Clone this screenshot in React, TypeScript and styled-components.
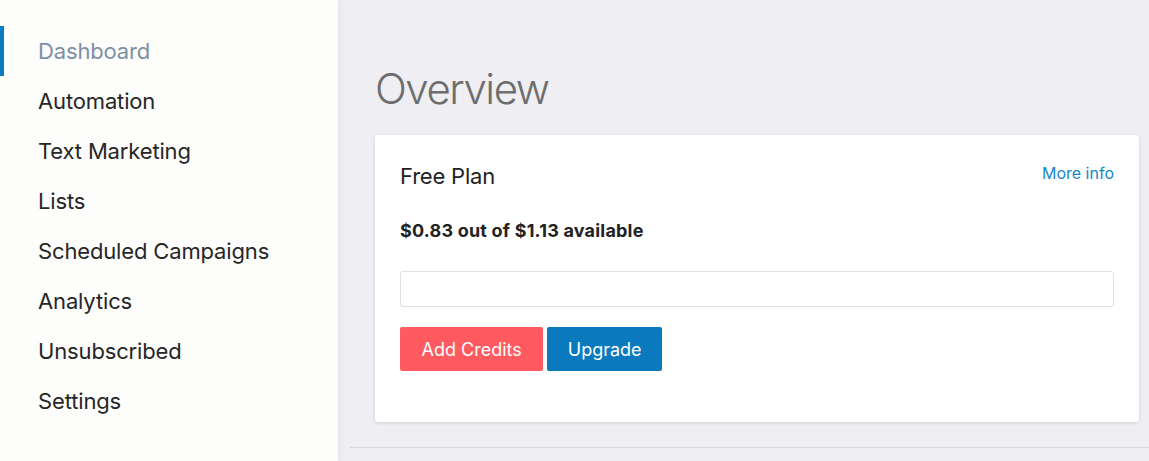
import React from "react";
import styled, { createGlobalStyle } from "styled-components";

const Global = createGlobalStyle`
  html, body { margin: 0; padding: 0; }
  body {
    font-family: Inter, "Liberation Sans", Arial, sans-serif;
    background: #eeeef3;
    -webkit-font-smoothing: antialiased;
  }
`;

const Layout = styled.div`
  display: flex;
  width: 1149px;
  height: 461px;
  overflow: hidden;
  background: #eeeef3;
`;

const Sidebar = styled.nav`
  width: 338px;
  flex-shrink: 0;
  background: #fdfdfc;
  padding-top: 26px;
  box-shadow: 2px 0 8px rgba(0, 0, 0, 0.05);
  position: relative;
  z-index: 1;
`;

const NavItem = styled.a<{ $active?: boolean }>`
  display: flex;
  align-items: center;
  height: 50px;
  padding-left: 34px;
  font-size: 22px;
  font-weight: 400;
  color: ${(p) => (p.$active ? "#7c90a6" : "#262626")};
  border-left: 4px solid ${(p) => (p.$active ? "#0b7bc1" : "transparent")};
  text-decoration: none;
  letter-spacing: -0.15px;
`;

const Main = styled.main`
  flex: 1;
  padding: 64px 10px 0 37px;
  display: flex;
  flex-direction: column;
`;

const Title = styled.h1`
  margin: 0 0 21px 0;
  font-size: 42px;
  font-weight: 300;
  color: #6d6d6d;
  line-height: 50px;
  letter-spacing: -1.5px;
`;

const Card = styled.section`
  background: #fff;
  border-radius: 3px;
  box-shadow: 0 1px 4px rgba(0, 0, 0, 0.12);
  padding: 24px 25px 51px 25px;
  display: flex;
  flex-direction: column;
`;

const CardHeader = styled.div`
  display: flex;
  justify-content: space-between;
  align-items: center;
`;

const PlanName = styled.h2`
  margin: 0;
  font-size: 22px;
  font-weight: 400;
  color: #222;
  line-height: 34px;
  letter-spacing: -0.2px;
`;

const MoreInfo = styled.a`
  font-size: 16px;
  color: #1a85c8;
  text-decoration: none;
  margin-top: -6px;
`;

const Balance = styled.p`
  margin: 27px 0 0 0;
  font-size: 18px;
  font-weight: 700;
  color: #222;
  line-height: 22px;
  letter-spacing: 0.2px;
`;

const Input = styled.input`
  margin-top: 29px;
  height: 36px;
  box-sizing: border-box;
  border: 1px solid #dcdfe6;
  border-radius: 3px;
  background: #fff;
  outline: none;
`;

const Buttons = styled.div`
  display: flex;
  gap: 4px;
  margin-top: 20px;
`;

const Button = styled.button<{ $variant: "red" | "blue" }>`
  height: 44px;
  padding: 0 ${(p) => (p.$variant === "red" ? "21.5px" : "20.5px")};
  border: none;
  border-radius: 2px;
  font-family: inherit;
  font-size: 18px;
  color: #fff;
  background: ${(p) => (p.$variant === "red" ? "#ff5a5f" : "#0a79bd")};
`;

const Divider = styled.hr`
  margin: 25px 0 0 -25px;
  border: none;
  border-top: 1px solid #d5d9e0;
  width: calc(100% + 40px);
`;

const items = [
  "Dashboard",
  "Automation",
  "Text Marketing",
  "Lists",
  "Scheduled Campaigns",
  "Analytics",
  "Unsubscribed",
  "Settings",
];

export default function App() {
  return (
    <>
      <Global />
      <Layout>
        <Sidebar>
          {items.map((it, i) => (
            <NavItem key={it} $active={i === 0}>
              {it}
            </NavItem>
          ))}
        </Sidebar>
        <Main>
          <Title>Overview</Title>
          <Card>
            <CardHeader>
              <PlanName>Free Plan</PlanName>
              <MoreInfo>More info</MoreInfo>
            </CardHeader>
            <Balance>$0.83 out of $1.13 available</Balance>
            <Input />
            <Buttons>
              <Button $variant="red">Add Credits</Button>
              <Button $variant="blue">Upgrade</Button>
            </Buttons>
          </Card>
          <Divider />
        </Main>
      </Layout>
    </>
  );
}
